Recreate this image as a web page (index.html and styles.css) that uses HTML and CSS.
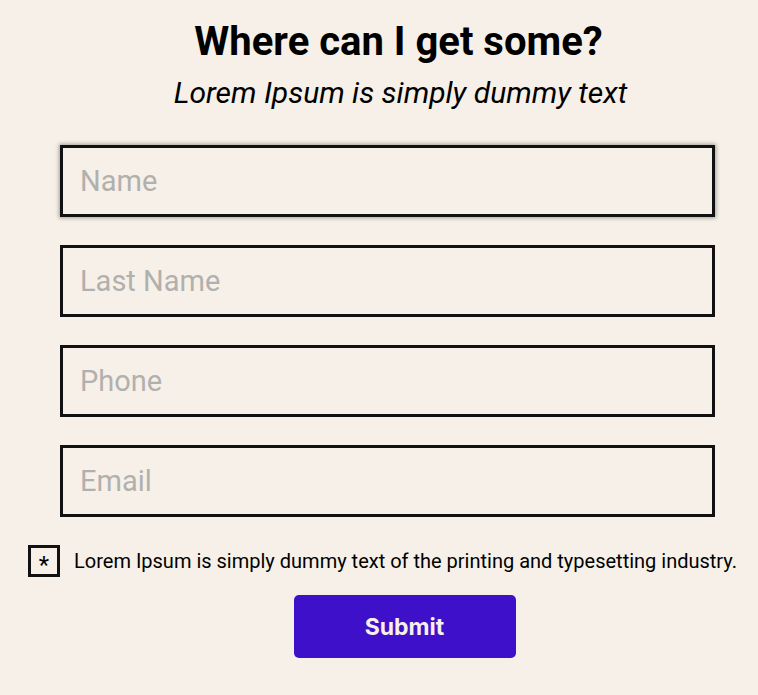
FILE: index.html
```html
<!DOCTYPE html>
<html>
<head>
<meta charset="utf-8">
<link rel="stylesheet" href="styles.css">
</head>
<body>
<form class="form">
  <h1 class="title">Where can I get some?</h1>
  <p class="subtitle">Lorem Ipsum is simply dummy text</p>
  <div class="fields">
    <input class="field focused" type="text" placeholder="Name">
    <input class="field" type="text" placeholder="Last Name">
    <input class="field" type="text" placeholder="Phone">
    <input class="field" type="text" placeholder="Email">
  </div>
  <label class="agree">
    <span class="box">*</span>
    <span class="agree-text">Lorem Ipsum is simply dummy text of the printing and typesetting industry.</span>
  </label>
  <button class="submit" type="button">Submit</button>
</form>
</body>
</html>
```
FILE: styles.css
```css
html, body {
  margin: 0;
  padding: 0;
  background: #f6f0e9;
  font-family: Roboto, "Liberation Sans", sans-serif;
  color: #000;
}
.form {
  width: 775px;
  display: flex;
  flex-direction: column;
  align-items: center;
  padding-top: 18px;
}
.title {
  margin: 0;
  padding-left: 22px;
  font-size: 40px;
  font-weight: 700;
  line-height: 48px;
}
.subtitle {
  margin: 9px 0 0;
  padding-left: 26px;
  font-size: 30px;
  font-style: italic;
  line-height: 36px;
}
.fields {
  display: flex;
  flex-direction: column;
  gap: 28px;
  margin-top: 34px;
}
.field {
  box-sizing: border-box;
  width: 655px;
  height: 72px;
  border: 3px solid #111;
  background: transparent;
  padding: 0 17px;
  font-family: Roboto, sans-serif;
  font-size: 29px;
  color: #000;
  outline: none;
}
.field::placeholder {
  color: #b2b0ad;
}
.field.focused {
  box-shadow: 0 0 4px 1px rgba(0,0,0,0.35);
}
.agree {
  display: flex;
  align-items: center;
  gap: 14px;
  margin-top: 28px;
  align-self: flex-start;
  margin-left: 28px;
}
.box {
  box-sizing: border-box;
  width: 32px;
  height: 32px;
  border: 3px solid #111;
  display: flex;
  justify-content: center;
  align-items: center;
  font-size: 24px;
  padding-top: 8px;
  line-height: 1;
}
.agree-text {
  font-size: 20px;
}
.submit {
  margin-top: 18px;
  margin-left: 34px;
  width: 222px;
  height: 63px;
  border: none;
  border-radius: 5px;
  background: #3f10c9;
  color: #f6f0e9;
  font-family: Inter, "Open Sans", sans-serif;
  font-weight: 700;
  font-size: 23px;
}
```
